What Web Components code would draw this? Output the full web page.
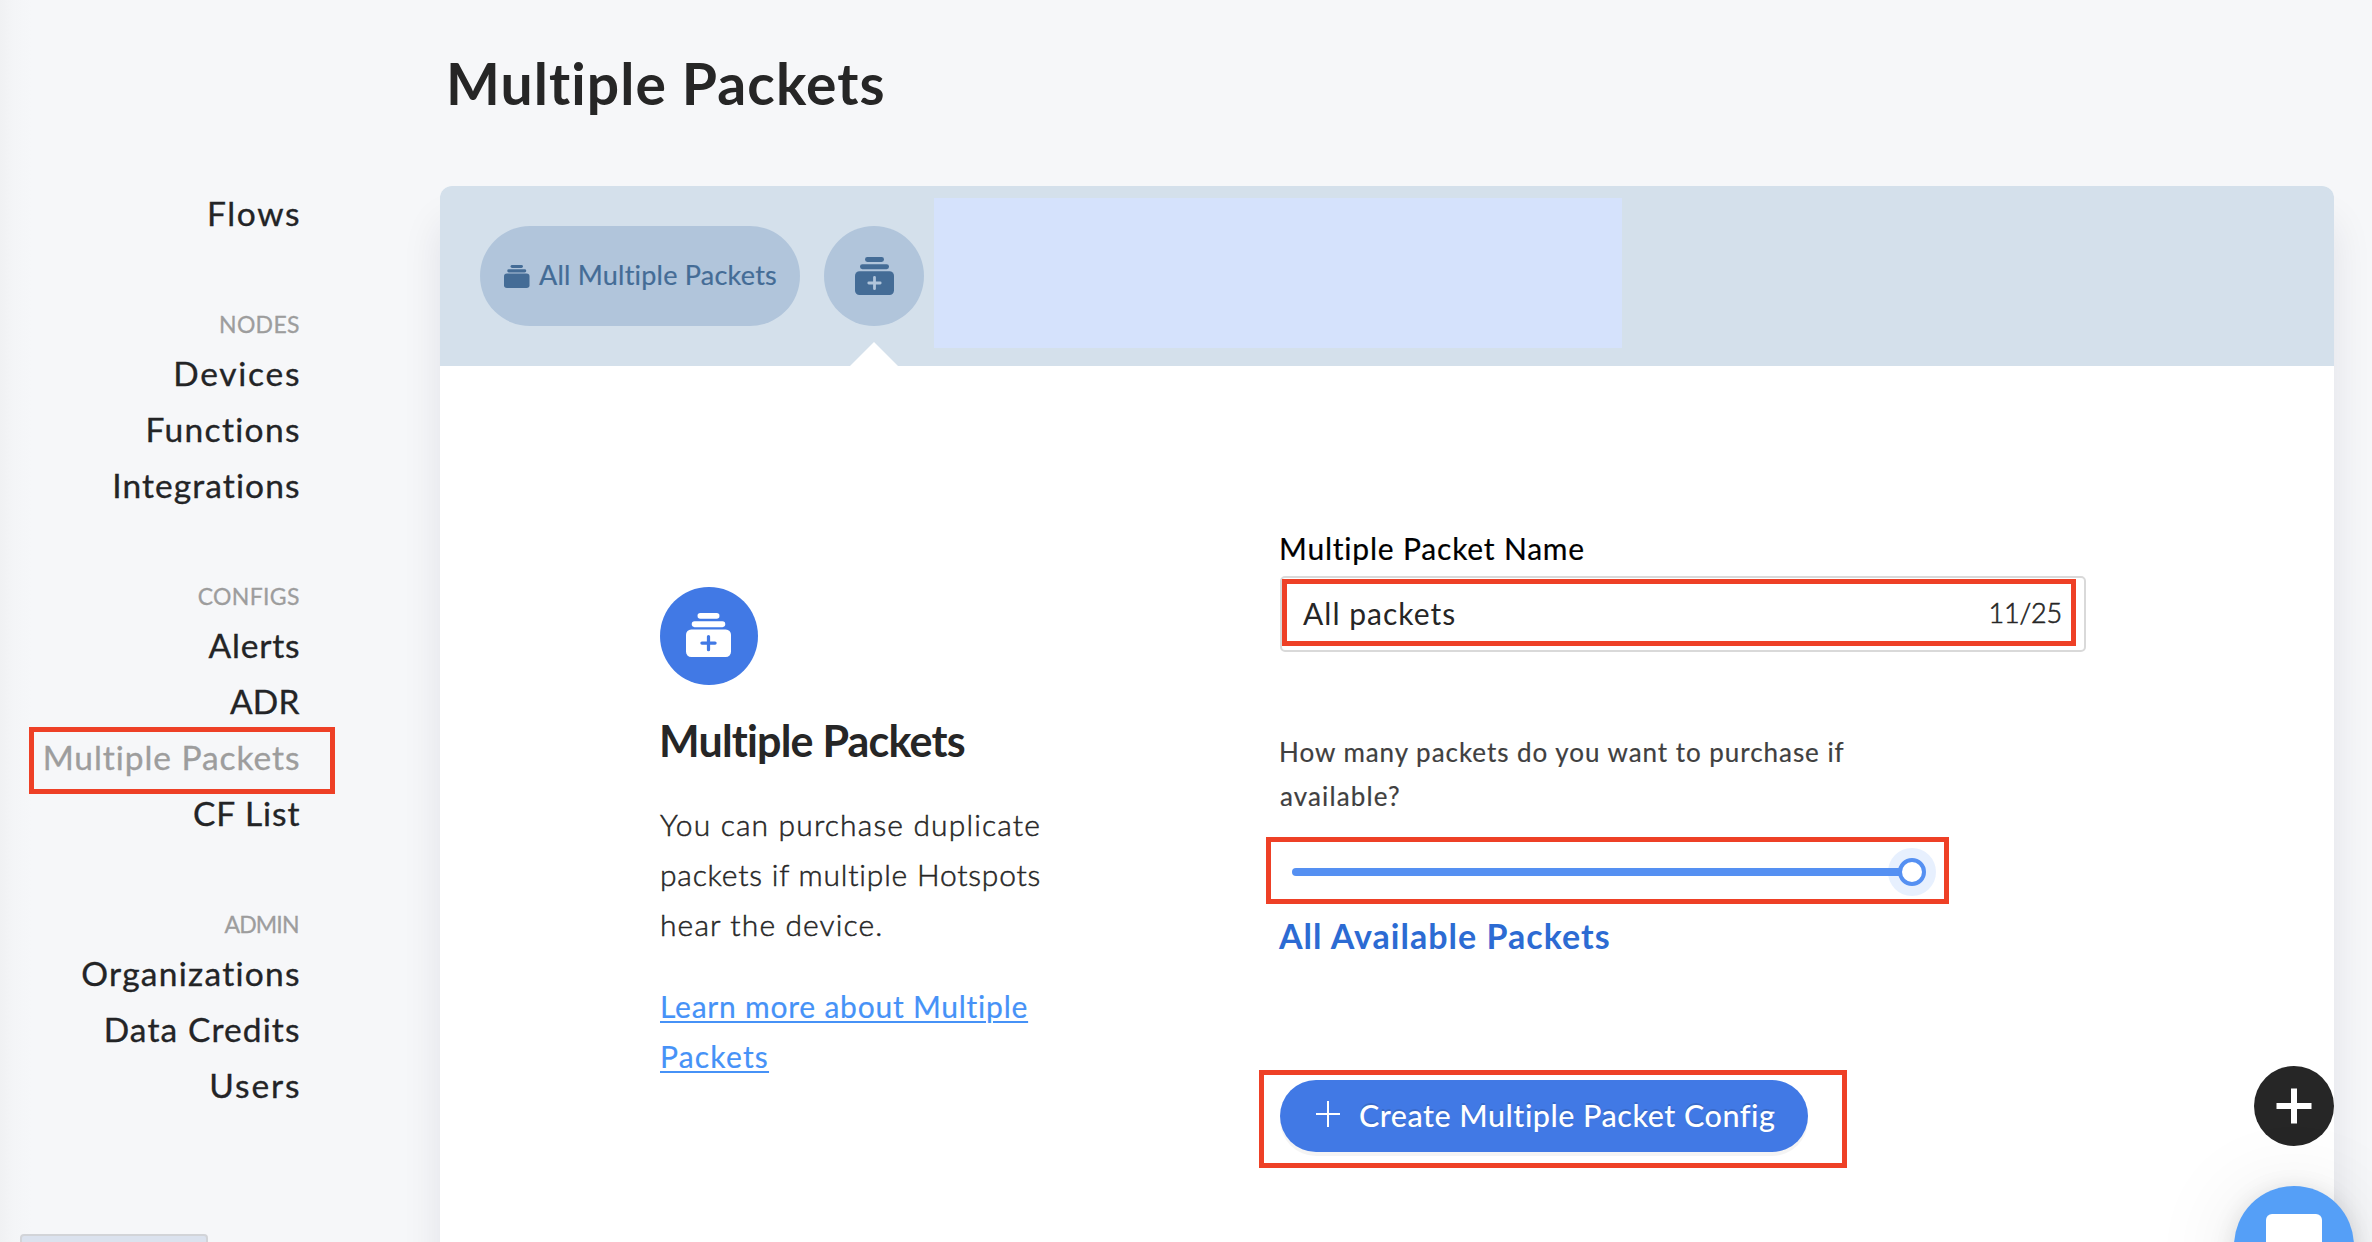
<!DOCTYPE html>
<html lang="en"><head><meta charset="utf-8"><title>Multiple Packets</title>
<style>
html,body{margin:0;height:1242px;overflow:hidden;background:#f6f7f9}
body{font-family:Lato,"Open Sans",sans-serif;font-variant-ligatures:none;color:#262626}
</style></head><body>
<console-app></console-app>
<script>
const define = (name, html) => customElements.define(name, class extends HTMLElement {
  constructor() {
    super();
    const t = document.createElement('template');
    t.innerHTML = html;
    this.attachShadow({ mode: 'open' }).append(t.content.cloneNode(true));
  }
});

/* Red annotation frame laid over its positioned parent */
define('red-frame', `<style>:host{position:absolute;box-sizing:border-box;border:5px solid #ee4026;pointer-events:none}</style>`);

define('nav-heading', `<style>
:host{display:block;height:44px;line-height:46px;margin-top:60px;font-size:23px;color:#9d9d9d;text-align:right;letter-spacing:var(--ls);margin-right:calc(var(--ls)*-1);-webkit-text-stroke:.3px currentColor}
</style><slot></slot>`);

define('nav-item', `<style>
:host{display:block;position:relative;height:56px;line-height:56px;font-size:33.5px;color:#232426;text-align:right}
:host([active]){color:#9d9d9d}
span{letter-spacing:var(--ls);margin-right:calc(var(--ls)*-1);-webkit-text-stroke:.35px currentColor}
</style><span><slot></slot></span><slot name="frame"></slot>`);

define('side-nav', `<style>
:host{display:block;box-sizing:border-box;flex:none;width:300px;height:1242px;padding:185px .5px 0 0;background:linear-gradient(90deg,#f0f1f3 0,#f4f5f7 14px,#f6f7f9 32px)}
red-frame{left:29px;top:-2px;width:306px;height:67px}
.status{position:absolute;left:20px;top:1234px;width:188px;height:40px;box-sizing:border-box;border:2px solid #d2d4d8;border-radius:4px;background:#dbe2ee}
</style>
<nav-item style="--ls:1.6px">Flows</nav-item>
<nav-heading style="--ls:.31px">NODES</nav-heading>
<nav-item style="--ls:1.76px">Devices</nav-item>
<nav-item style="--ls:1.34px">Functions</nav-item>
<nav-item style="--ls:1.1px">Integrations</nav-item>
<nav-heading style="--ls:.34px">CONFIGS</nav-heading>
<nav-item style="--ls:.8px">Alerts</nav-item>
<nav-item style="--ls:.2px">ADR</nav-item>
<nav-item active style="--ls:.94px">Multiple Packets<red-frame slot="frame"></red-frame></nav-item>
<nav-item style="--ls:.93px">CF List</nav-item>
<nav-heading style="--ls:-.84px">ADMIN</nav-heading>
<nav-item style="--ls:1.27px">Organizations</nav-item>
<nav-item style="--ls:1.12px">Data Credits</nav-item>
<nav-item style="--ls:1.9px">Users</nav-item>
<div class="status"></div>`);

define('stack-icon', `<style>
:host{display:block;flex:none}svg{display:block;width:100%;height:100%}
.plus{display:none;stroke:var(--plus)}
:host([plus]) .plus{display:block}
</style><svg viewBox="0 0 39 38" preserveAspectRatio="none" fill="currentColor">
<rect x="10" y="0" width="19" height="5" rx="2.4"/><rect x="5" y="7.2" width="29" height="5" rx="2.4"/>
<rect x="0" y="14.2" width="39" height="23.8" rx="4.5"/>
<path class="plus" d="M19.5 20.3v11.4M13.8 26h11.4" stroke-width="2.8" stroke-linecap="round"/></svg>`);

define('tab-bar', `<style>
:host{display:flex;align-items:center;position:relative;box-sizing:border-box;height:180px;padding-left:40px;background:#d4e0eb;color:#446c96}
.pill{display:flex;align-items:center;box-sizing:border-box;width:320px;height:100px;padding-left:24px;border-radius:50px;background:#b1c5db}
.pill stack-icon{width:25.5px;height:23px}
.pill span{margin-left:9.5px;padding-bottom:3px;font-size:27px;white-space:nowrap;letter-spacing:.22px;-webkit-text-stroke:.2px currentColor}
.add{position:relative;display:flex;align-items:center;justify-content:center;width:100px;height:100px;margin-left:24px;border-radius:50%;background:#b1c5db;--plus:#b1c5db}
.add stack-icon{width:39px;height:38px}
.add::after{content:"";position:absolute;left:26px;top:116px;border:24px solid transparent;border-top:0;border-bottom-color:#fff}
.blank{width:688px;height:150px;margin:0 0 6px 10px;background:#d5e2fc}
</style>
<div class="pill"><stack-icon></stack-icon><span>All Multiple Packets</span></div>
<div class="add"><stack-icon plus></stack-icon></div>
<div class="blank"></div>`);

define('about-panel', `<style>
:host{display:block;width:620px}
.badge{display:flex;align-items:center;justify-content:center;width:97.5px;height:98px;border-radius:50%;background:#4179e5;color:#fff;--plus:#4179e5}
stack-icon{width:45px;height:44px;margin:0 1px 2px 0}
h2{margin:26px 0 0 -1px;font-size:43px;line-height:60px;font-weight:700;letter-spacing:-.8px}
p{margin:28px 0 0;font-size:30px;line-height:50px;font-weight:300;-webkit-text-stroke:.5px currentColor}
p span,a span{display:table;white-space:nowrap}
a{display:block;margin-top:32px;font-size:30px;line-height:50px;color:#4692f7;text-decoration:none;-webkit-text-stroke:.2px currentColor}
a span{text-decoration:underline;text-decoration-thickness:2px;text-underline-offset:3px}
</style>
<div class="badge"><stack-icon plus></stack-icon></div>
<h2>Multiple Packets</h2>
<p><span style="letter-spacing:1.15px">You can purchase duplicate</span><span style="letter-spacing:.8px">packets if multiple Hotspots</span><span style="letter-spacing:1.12px">hear the device.</span></p>
<a><span style="letter-spacing:.77px">Learn more about Multiple</span><span style="letter-spacing:1.2px">Packets</span></a>`);

define('text-field', `<style>
:host{display:block}
label{display:block;font-size:30px;line-height:40px;color:#000;letter-spacing:.8px;margin-left:-1px;-webkit-text-stroke:.2px currentColor}
.box{position:relative;display:flex;align-items:center;justify-content:space-between;box-sizing:border-box;width:806px;height:76px;margin-top:8px;padding:0 22px 2px 21px;border:2px solid #d9d9d9;border-radius:5px;background:#fff;font-size:30px;letter-spacing:1.03px}
.count{font-size:27px;font-weight:300;-webkit-text-stroke:.6px currentColor;letter-spacing:-.18px;padding-bottom:2px}
red-frame{left:0;top:1px;width:794px;height:67px}
</style><label>Multiple Packet Name</label>
<div class="box"><span>All packets</span><span class="count">11/25</span><red-frame></red-frame></div>`);

define('packet-slider', `<style>
:host{display:flex;align-items:center;position:relative;height:48px;width:656px;margin-top:30px}
.rail{width:620px;height:8px;margin-left:12px;border-radius:4px;background:#5590f2}
.knob{box-sizing:border-box;width:28px;height:28px;margin-left:-14px;border:4px solid #5590f2;border-radius:50%;background:#fff;box-shadow:0 0 0 10px rgba(85,150,247,.14)}
red-frame{left:-14px;top:-11px;width:683px;height:67px}
</style><div class="rail"></div><div class="knob"></div><red-frame></red-frame>`);

define('create-button', `<style>
:host{display:flex;align-items:center;position:relative;box-sizing:border-box;width:528px;height:72px;margin-top:120px;padding-left:36px;border-radius:36px;background:#4179e5;color:#fff;font-size:30.5px;box-shadow:0 4px 0 rgba(0,0,0,.045);text-shadow:0 -2px 0 rgba(0,0,0,.12)}
svg{display:block;width:24px;height:26px;margin:0 19px 4px 0}
span{white-space:nowrap;letter-spacing:.5px;padding-bottom:3px;font-weight:500}
red-frame{left:-21px;top:-10px;width:588px;height:98px}
</style><svg viewBox="0 0 24 26" stroke="#fff" stroke-width="2"><path d="M12 0v26M0 13h24"/></svg><span>Create Multiple Packet Config</span><red-frame></red-frame>`);

define('packet-form', `<style>
:host{display:block;margin-top:-59px}
p{margin:78px 0 0;font-size:26px;line-height:44px;color:#404040;-webkit-text-stroke:.2px currentColor}
p span{display:table;white-space:nowrap}
strong{display:table;margin:15px 0 0 -1px;font-size:34px;line-height:50px;font-weight:700;color:#2c6bd3;letter-spacing:1.03px}
create-button{margin-top:119px}
</style>
<text-field></text-field>
<p><span style="letter-spacing:.96px;margin-left:-1px">How many packets do you want to purchase if</span><span style="letter-spacing:1.14px">available?</span></p>
<packet-slider></packet-slider>
<strong>All Available Packets</strong>
<create-button></create-button>`);

define('packet-card', `<style>
:host{display:block;width:1894px;height:1200px;border-radius:12px;background:#fff;box-shadow:0 36px 40px rgba(20,20,60,.09);overflow:hidden}
.body{display:flex;align-items:flex-start;padding:221px 0 0 220px}
</style><tab-bar></tab-bar><div class="body"><about-panel></about-panel><packet-form></packet-form></div>`);

define('floating-actions', `<style>
:host{position:absolute;left:2234px;top:1066px;width:120px;display:flex;flex-direction:column;align-items:center;gap:40px}
.add{width:80px;height:80px;border-radius:50%;background:#262626}
.chat{display:flex;justify-content:center;width:120px;height:120px;border-radius:50%;background:#559ff7;box-shadow:0 4px 24px rgba(0,0,0,.12),0 8px 90px rgba(0,0,0,.1)}
svg{display:block}
</style>
<div class="add"><svg viewBox="0 0 80 80" stroke="#fff" stroke-width="6"><path d="M40 22.500v35M22.500 40h35"/></svg></div>
<div class="chat"><svg width="120" height="120" viewBox="0 0 120 120"><rect x="32" y="28" width="56" height="60" rx="6" fill="#fff"/></svg></div>`);

define('console-app', `<style>
:host{display:flex;position:relative;width:2372px;height:1242px;overflow:hidden}
main{margin-left:140px}
h1{margin:43px 0 63px 6px;font-size:57px;line-height:80px;font-weight:700;letter-spacing:1.08px}
</style>
<side-nav></side-nav><main><h1>Multiple Packets</h1><packet-card></packet-card></main>
<floating-actions></floating-actions>`);
</script></body></html>
